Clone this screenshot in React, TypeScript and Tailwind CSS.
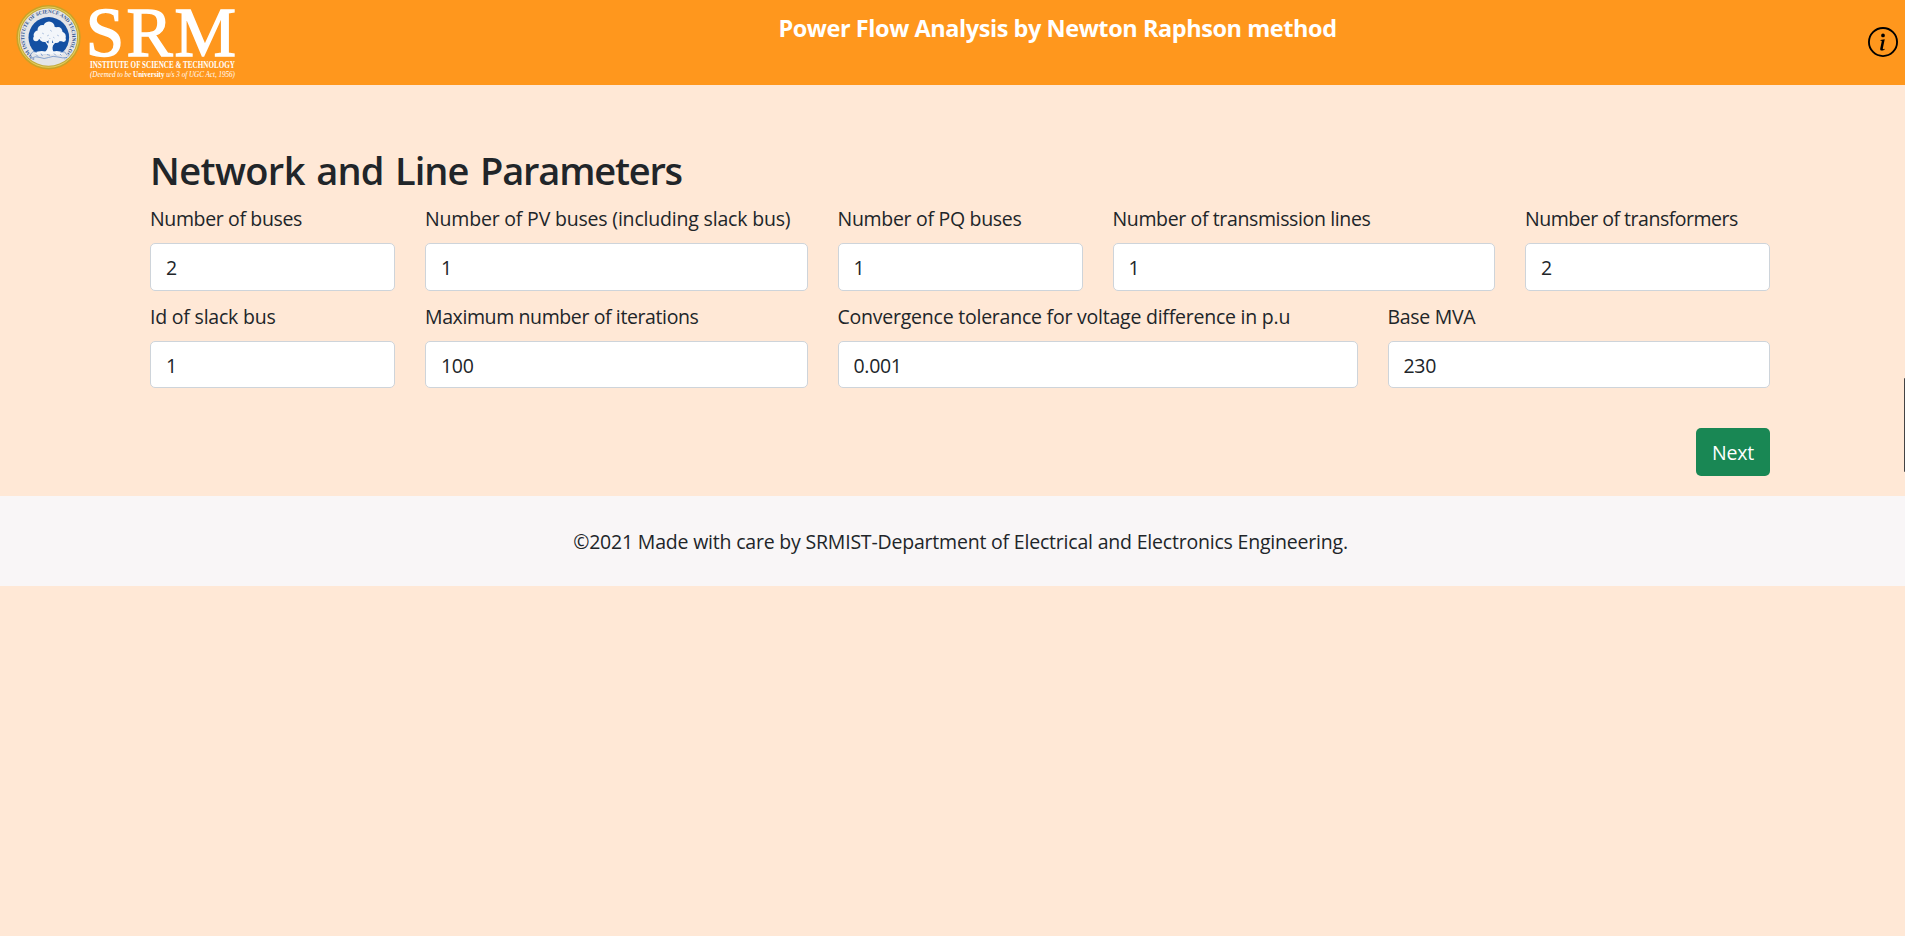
import { BsInfoCircle } from "react-icons/bs";

type FieldProps = {
  id: string;
  label: string;
  value: string;
  span: string;
  tracking: string;
};

const fields: FieldProps[] = [
  { id: "buses", label: "Number of buses", value: "2", span: "col-span-2", tracking: "tracking-[-0.364px]" },
  { id: "pv", label: "Number of PV buses (including slack bus)", value: "1", span: "col-span-3", tracking: "tracking-[-0.187px]" },
  { id: "pq", label: "Number of PQ buses", value: "1", span: "col-span-2", tracking: "tracking-[-0.3px]" },
  { id: "lines", label: "Number of transmission lines", value: "1", span: "col-span-3", tracking: "tracking-[-0.37px]" },
  { id: "transformers", label: "Number of transformers", value: "2", span: "col-span-2", tracking: "tracking-[-0.486px]" },
  { id: "slack", label: "Id of slack bus", value: "1", span: "col-span-2", tracking: "tracking-[-0.207px]" },
  { id: "iterations", label: "Maximum number of iterations", value: "100", span: "col-span-3", tracking: "tracking-[-0.39px]" },
  { id: "tolerance", label: "Convergence tolerance for voltage difference in p.u", value: "0.001", span: "col-span-4", tracking: "tracking-[-0.23px]" },
  { id: "mva", label: "Base MVA", value: "230", span: "col-span-3", tracking: "tracking-[-0.3px]" },
];

function Field({ id, label, value, span, tracking }: FieldProps) {
  return (
    <div className={`${span} flex flex-col`}>
      <label htmlFor={id} className={`mb-[9px] pt-px whitespace-nowrap leading-[30px] ${tracking}`}>
        {label}
      </label>
      <input
        id={id}
        defaultValue={value}
        className="h-[47.5px] w-full rounded-[5px] border border-[#ced4da] bg-white px-[15px] pt-[2px] tracking-[-0.3px] outline-none"
      />
    </div>
  );
}

function Logo() {
  return (
    <svg width="250" height="85" viewBox="0 0 250 85" className="block shrink-0" role="img">
      <defs>
        <path id="ring" d="M35.5 57.5 A24 24 0 1 1 61.1 57.5" />
      </defs>
      <circle cx="48.5" cy="37.2" r="32.2" fill="#c9a227" />
      <circle cx="48.5" cy="37.2" r="30.6" fill="#e3cf62" />
      <circle cx="48.5" cy="37.2" r="29.6" fill="#c2a83a" />
      <circle cx="48.5" cy="37.2" r="28.6" fill="#e4e5e8" />
      <text fill="#31548f" fontSize="5.2" fontWeight="700" fontFamily="Liberation Serif, serif">
        <textPath href="#ring" textLength="122" lengthAdjust="spacingAndGlyphs">
          SRM INSTITUTE OF SCIENCE AND TECHNOLOGY
        </textPath>
      </text>
      <circle cx="48.8" cy="37.4" r="20.3" fill="#1450a3" />
      <path d="M30 51.5 Q40 55 48.5 54 Q58 53 68 51.5 L66 58 Q50 63 32 58Z" fill="#e4e5e8" />
      <g fill="#f3f6fa">
        <circle cx="49" cy="27" r="5.6" />
        <circle cx="42.5" cy="30" r="5" />
        <circle cx="38" cy="35" r="4.4" />
        <circle cx="36" cy="38.5" r="2.8" />
        <circle cx="44.5" cy="36.5" r="5.6" />
        <circle cx="53" cy="33" r="6.5" />
        <circle cx="58" cy="31.5" r="4.4" />
        <circle cx="61" cy="36.5" r="4.8" />
        <circle cx="56" cy="39" r="4" />
        <circle cx="63.5" cy="39.5" r="2.4" />
        <path d="M44 40 L48.5 43.5 V39 H52 V43 L57 40.5 L53 45.5 Q51.5 49.5 54.5 53 L43.5 53.5 Q48 49.5 48 46Z" />
        <path d="M34 52.5 Q42 49.5 49 52.5 Q57 49.5 63.5 52.5 L62 54.5 H36Z" />
      </g>
      <g stroke="#5e86c4" strokeWidth="0.7" fill="none">
        <path d="M30 55.5 l3-4 4 .8 M67 55 l-2.5-3.2 -4 .6 M30 58.5 Q36 55.5 40 57.5 T48.5 57.5 T58 57 T67 57.5" />
        <path d="M36 54.5 l2 2 M41 53.5 l1.5 2.5 M47 54.5 l3 .8 M54 53.5 l2 2 M60 54 l1.5 1.5" />
      </g>
      <g stroke="#1450a3" strokeWidth="0.6" fill="none" opacity="0.45">
        <path d="M42 33 l2 1 M50 30 l2 1.5 M47 36 l2 -1 M57 35 l2 1 M40 37.5 l1.5 .5 M53 37 l1.5 1" />
      </g>
      <text
        x="90"
        y="58.5"
        transform="scale(0.954 0.95)"
        fill="#fff"
        stroke="#fff"
        strokeWidth="1.5"
        fontSize="72.5"
        fontFamily="Liberation Serif, serif"
        textLength="157.5"
        lengthAdjust="spacing"
      >
        SRM
      </text>
      <text
        x="90"
        y="68.3"
        fill="#fff"
        fontSize="9.6"
        fontWeight="700"
        fontFamily="Liberation Serif, serif"
        textLength="145"
        lengthAdjust="spacingAndGlyphs"
      >
        INSTITUTE OF SCIENCE &amp; TECHNOLOGY
      </text>
      <text
        x="90"
        y="77.3"
        fill="#fff"
        fontSize="8"
        fontStyle="italic"
        fontFamily="Liberation Serif, serif"
        textLength="145"
        lengthAdjust="spacingAndGlyphs"
      >
        (Deemed to be <tspan fontStyle="normal" fontWeight="700">University</tspan> u/s 3 of UGC Act, 1956)
      </text>
    </svg>
  );
}

export default function App() {
  return (
    <div className="relative min-h-screen bg-[#ffe8d6] font-['Open_Sans','Noto_Sans',sans-serif] text-[19.5px] text-[#212529]">
      <header className="flex h-[85px] items-start bg-[#ff971d]">
        <Logo />
        <h5 className="grow pt-[13px] pr-[3px] text-center text-[23.5px] leading-[30px] font-bold tracking-[-0.44px] whitespace-nowrap text-white">
          Power Flow Analysis by Newton Raphson method
        </h5>
        <BsInfoCircle className="mt-[27px] mr-[7px] size-[30px] shrink-0 text-black" />
      </header>

      <main className="pt-[60px] pr-[120px] pl-[135px]">
        <section className="px-[15px]">
          <h1 className="mb-[9px] pt-px font-['Open_Sans',sans-serif] text-[38px] leading-[48px] font-semibold tracking-[-0.9px] [word-spacing:2.5px]">
            <span className="tracking-[-0.6px]">Network</span> and Line{" "}
            <span className="tracking-[-1.2px]">Parameters</span>
          </h1>
          <form className="grid grid-cols-12 gap-x-[30px] gap-y-[10px]">
            {fields.map((field) => (
              <Field key={field.id} {...field} />
            ))}
          </form>
          <div className="flex justify-end pt-[40px] pb-5">
            <button className="h-[48px] w-[74px] rounded-[5px] bg-[#198754] pt-[2px] tracking-[-0.2px] text-white">
              Next
            </button>
          </div>
        </section>
      </main>

      <footer className="flex h-[90px] items-center justify-center bg-[#f9f6f7] pl-[16px]">
        <p className="pt-[2px] leading-[30px] tracking-[-0.2px]">
          ©2021 Made with care by SRMIST-Department of Electrical and Electronics Engineering.
        </p>
      </footer>

      <div className="absolute top-[378px] right-0 h-[94px] w-px rounded-l-sm bg-[#444]" />
    </div>
  );
}
